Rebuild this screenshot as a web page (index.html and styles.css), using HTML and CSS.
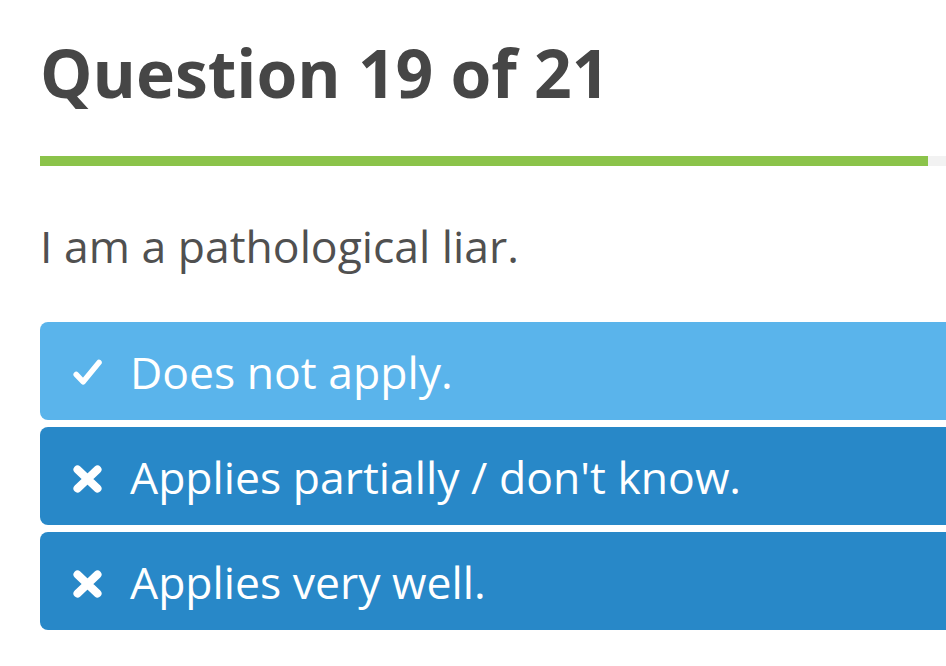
FILE: index.html
```html
<!DOCTYPE html>
<html lang="en">
<head>
    <meta charset="UTF-8">
    <meta name="viewport" content="width=device-width, initial-scale=1.0">
    <link rel="stylesheet" href="styles.css">
    <title>Question 19 of 21</title>
</head>
<body>
    <div id="quiz">
        <h1 id="quiz-title">Question 19 of 21</h1>

        <div id="progress">
            <div id="progress-bar" style="width: 90.5%"></div>
        </div>

        <p id="question">I am a pathological liar.</p>

        <div id="answers">
            <button class="answer answer-selected">
                <svg class="answer-icon" viewBox="0 0 30 30">
                    <path d="M3.2 16.5 L10.2 23.8 L26 4.5" fill="none" stroke="#fff" stroke-width="5.5" stroke-linecap="round" stroke-linejoin="round"/>
                </svg>
                <span>Does not apply.</span>
            </button>
            <button class="answer">
                <svg class="answer-icon" viewBox="0 0 30 30">
                    <path d="M4.5 6.5 L24.5 25.5 M24.5 6.5 L4.5 25.5" fill="none" stroke="#fff" stroke-width="8" stroke-linecap="round"/>
                </svg>
                <span>Applies partially / don't know.</span>
            </button>
            <button class="answer">
                <svg class="answer-icon" viewBox="0 0 30 30">
                    <path d="M4.5 6.5 L24.5 25.5 M24.5 6.5 L4.5 25.5" fill="none" stroke="#fff" stroke-width="8" stroke-linecap="round"/>
                </svg>
                <span>Applies very well.</span>
            </button>
        </div>
    </div>
</body>
</html>
```

FILE: styles.css
```css
* {
    font-family: "Open Sans", "DejaVu Sans", sans-serif;
    box-sizing: border-box;
}

body {
    margin: 0;
    background-color: #ffffff;
    overflow: hidden;
}

#quiz {
    width: 1021px; /* wider than the window, the right side gets cut off */
    padding: 27px 0 0 40px;
}

#quiz-title {
    margin: 0;
    font-size: 66px;
    line-height: 90px;
    font-weight: 700;
    color: #464646;
}

#progress {
    margin-top: 39px;
    height: 10px;
    background-color: #f2f2f2;
}

#progress-bar {
    height: 100%;
    background-color: #8bc34a;
}

#question {
    margin: 50px 0 0;
    font-size: 44.5px;
    line-height: 60px;
    color: #505050;
}

#answers {
    margin-top: 46px;
    display: flex;
    flex-direction: column;
    gap: 7px;
}

.answer {
    display: flex;
    align-items: center;
    gap: 27px;
    width: 100%;
    height: 98px;
    padding: 0 0 0 33px;
    border: none;
    border-radius: 8px;
    background-color: #2888c8;
    color: #ffffff;
    font-size: 44.5px;
    text-align: left;
}

.answer-selected {
    background-color: #5ab4eb;
}

.answer-icon {
    width: 30px;
    height: 30px;
    margin-top: 4px;
    flex-shrink: 0;
}
```
